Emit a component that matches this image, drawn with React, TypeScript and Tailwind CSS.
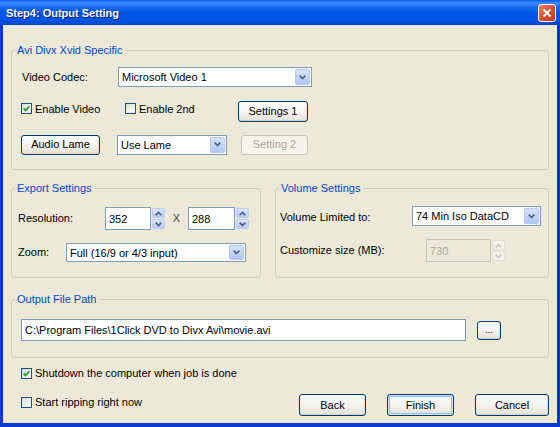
import React from "react";

const Chevron = ({ color = "#4D6185" }: { color?: string }) => (
  <svg width="7" height="5" viewBox="0 0 7 5">
    <path d="M0.7 0.7 L3.5 3.6 L6.3 0.7" stroke={color} strokeWidth="1.7" fill="none" />
  </svg>
);

const ChevronUp = ({ color = "#4D6185" }: { color?: string }) => (
  <svg width="7" height="5" viewBox="0 0 7 5">
    <path d="M0.7 4.3 L3.5 1.4 L6.3 4.3" stroke={color} strokeWidth="1.6" fill="none" />
  </svg>
);

function DropBtn() {
  return (
    <span className="mr-px h-[calc(100%-2px)] w-[15px] rounded-[2px] border border-[#B5C8F5] bg-linear-to-b from-[#D6E2FD] to-[#B0C6F6] flex items-center justify-center shrink-0">
      <Chevron />
    </span>
  );
}

function Combo({ text, className }: { text: string; className: string }) {
  return (
    <div className={`flex items-center border border-[#7F9DB9] bg-white leading-[14px] ${className}`}>
      <span className="pl-[3px] flex-1 whitespace-nowrap overflow-hidden">{text}</span>
      <DropBtn />
    </div>
  );
}

function Btn({
  children,
  className,
  disabled,
  def,
}: {
  children: React.ReactNode;
  className: string;
  disabled?: boolean;
  def?: boolean;
}) {
  const look = disabled
    ? "border-[#C9C7BA] bg-[#F5F4EA] text-[#ACA899]"
    : def
    ? "border-[#003C74] bg-linear-to-b from-white via-[#F4F3EE] to-[#E3E1D6] text-black shadow-[inset_0_0_0_1px_#CEE7FF,inset_0_0_0_2px_#9CB9EE]"
    : "border-[#003C74] bg-linear-to-b from-white via-[#F4F3EE] to-[#E3E1D6] text-black shadow-[inset_0_-1px_0_#D6D0C5,inset_-1px_0_0_#E2DED2]";
  return (
    <button
      type="button"
      className={`flex items-center justify-center rounded-[3px] border leading-none ${look} ${className}`}
    >
      {children}
    </button>
  );
}

function Check({ checked, label }: { checked?: boolean; label: string }) {
  return (
    <div className="flex items-center gap-[3px] leading-[14px]">
      <span className="w-[11px] h-[11px] border border-[#1C5180] bg-linear-to-br from-[#DCDCD7] to-white flex items-center justify-center shrink-0">
        {checked && (
          <svg width="7" height="7" viewBox="0 0 7 7">
            <path d="M0.6 3.4 L2.6 5.4 L6.4 1.2" stroke="#21A121" strokeWidth="1.7" fill="none" />
          </svg>
        )}
      </span>
      <span>{label}</span>
    </div>
  );
}

function Spin({
  value,
  inputClass,
  disabled,
}: {
  value: string;
  inputClass: string;
  disabled?: boolean;
}) {
  const btn = disabled
    ? "border-[#E2E0D4] bg-[#F3F2EB]"
    : "border-[#BCCDF4] bg-linear-to-b from-[#DCE6FD] to-[#B7CBF7]";
  const arrow = disabled ? "#C9C7BA" : "#4D6185";
  return (
    <div className="flex h-[23px]">
      <div
        className={`h-full border flex items-center pl-[3px] leading-[14px] ${
          disabled ? "border-[#C9C7BA] bg-[#ECE9D8] text-[#ACA899]" : "border-[#7F9DB9] bg-white"
        } ${inputClass}`}
      >
        {value}
      </div>
      <div className="w-[14px] h-full flex flex-col gap-px py-px pl-px">
        <span className={`flex-1 rounded-[2px] border flex items-center justify-center ${btn}`}>
          <ChevronUp color={arrow} />
        </span>
        <span className={`flex-1 rounded-[2px] border flex items-center justify-center ${btn}`}>
          <Chevron color={arrow} />
        </span>
      </div>
    </div>
  );
}

function Group({
  title,
  className,
  children,
}: {
  title: string;
  className?: string;
  children: React.ReactNode;
}) {
  return (
    <fieldset className={`border border-[#D0D0BF] rounded-[3px] p-0 m-0 min-w-0 ${className ?? ""}`}>
      <legend className="ml-[3px] px-[2px] text-[#0046D5] leading-[14px]">{title}</legend>
      {children}
    </fieldset>
  );
}

export default function App() {
  return (
    <div className="w-[560px] h-[427px] flex flex-col bg-[#0B37D4] font-['Liberation_Sans',Arial,sans-serif] text-[11px] text-black">
      {/* Title bar */}
      <div className="h-[25px] shrink-0 flex items-start bg-[linear-gradient(to_bottom,#0A5AE8_0px,#3D8BFA_3px,#1A6CF0_7px,#0058E6_12px,#0055E3_20px,#0046D0_25px)]">
        <span className="ml-[6px] mt-[6px] text-white font-bold text-[11px] leading-[14px] [text-shadow:1px_1px_0_#0A1883]">
          Step4: Output Setting
        </span>
        <span className="ml-auto mr-[4px] mt-[4px] w-[18px] h-[18px] rounded-[3px] border border-white bg-linear-to-br from-[#E9806A] via-[#D9502F] to-[#C2391A] flex items-center justify-center">
          <svg width="10" height="10" viewBox="0 0 10 10">
            <path d="M1.5 1.5 L8.5 8.5 M8.5 1.5 L1.5 8.5" stroke="white" strokeWidth="2" />
          </svg>
        </span>
      </div>

      {/* Client area */}
      <div className="flex-1 mx-[3px] mb-[4px] bg-[#ECE9D8] px-[8px] pt-[18px] flex flex-col">
        <Group title="Avi Divx Xvid Specific">
          <div className="pl-[10px] pt-[10px] pb-[14px]">
            <div className="flex items-center h-[20px]">
              <span className="w-[96px]">Video Codec:</span>
              <Combo text="Microsoft Video 1" className="w-[194px] h-[20px]" />
            </div>
            <div className="flex items-center h-[21px] mt-[14px] -ml-px">
              <div className="w-[104px] mb-[6px]">
                <Check checked label="Enable Video" />
              </div>
              <div className="w-[113px] mb-[6px]">
                <Check label="Enable 2nd" />
              </div>
              <Btn className="w-[70px] h-[21px]">Settings 1</Btn>
            </div>
            <div className="flex items-center h-[21px] mt-[12px] -ml-px">
              <Btn className="w-[79px] h-[20px]">Audio Lame</Btn>
              <Combo text="Use Lame" className="ml-[17px] w-[110px] h-[20px]" />
              <Btn disabled className="ml-[14px] w-[67px] h-[20px]">
                Setting 2
              </Btn>
            </div>
          </div>
        </Group>

        <div className="flex gap-[14px] mt-[11px]">
          <Group title="Export Settings" className="w-[250px]">
            <div className="pl-[6px] pt-[12px] pb-[15px]">
              <div className="flex items-center h-[23px]">
                <span className="w-[87px]">Resolution:</span>
                <Spin value="352" inputClass="w-[46px]" />
                <span className="w-[23px] text-center text-[#444]">X</span>
                <Spin value="288" inputClass="w-[47px]" />
              </div>
              <div className="flex items-center h-[19px] mt-[13px]">
                <span className="w-[48px]">Zoom:</span>
                <Combo text="Full (16/9 or 4/3 input)" className="w-[180px] h-[19px]" />
              </div>
            </div>
          </Group>
          <Group title="Volume Settings" className="flex-1">
            <div className="pl-[4px] pt-[11px]">
              <div className="flex items-center h-[20px]">
                <span className="w-[132px] mt-[3px]">Volume Limited to:</span>
                <Combo text="74 Min Iso DataCD" className="w-[129px] h-[20px]" />
              </div>
              <div className="flex items-center h-[23px] mt-[13px]">
                <span className="w-[146px]">Customize size (MB):</span>
                <Spin disabled value="730" inputClass="w-[65px]" />
              </div>
            </div>
          </Group>
        </div>

        <Group title="Output File Path" className="mt-[14px]">
          <div className="pl-[9px] pt-[13px] pb-[16px] flex items-center">
            <div className="w-[445px] h-[22px] border border-[#7F9DB9] bg-white flex items-center pl-[3px] leading-[14px]">
              C:\Program Files\1Click DVD to Divx Avi\movie.avi
            </div>
            <Btn className="ml-[11px] w-[24px] h-[19px] text-[9px] text-[#555]">...</Btn>
          </div>
        </Group>

        <div className="flex items-start mt-[8px]">
          <div className="pl-[10px] flex flex-col gap-[15px]">
            <Check checked label="Shutdown the computer when job is done" />
            <Check label="Start ripping right now" />
          </div>
          <div className="ml-auto mt-[28px] flex gap-[21px]">
            <Btn className="w-[67px] h-[22px]">Back</Btn>
            <Btn def className="w-[67px] h-[22px]">
              Finish
            </Btn>
            <Btn className="w-[74px] h-[22px]">Cancel</Btn>
          </div>
        </div>
      </div>
    </div>
  );
}
